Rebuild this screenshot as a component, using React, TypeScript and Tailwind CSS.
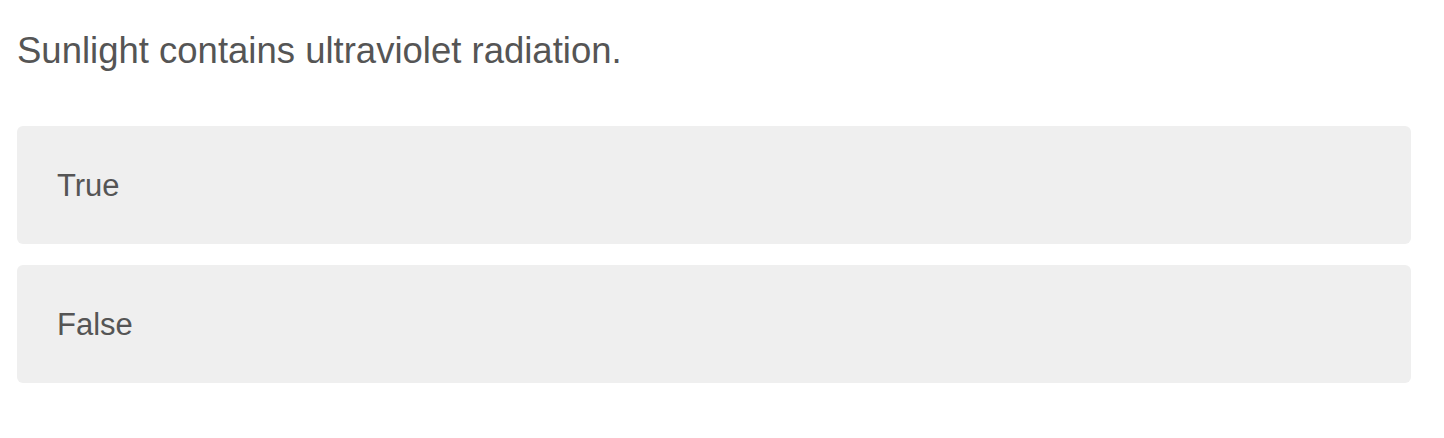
import React from 'react';

const options = ['True', 'False'];

const App: React.FC = () => {
  return (
    <div className="min-h-[438px] bg-white pl-[17px] pr-[33px] pt-[33px] font-['Liberation_Sans',Arial,sans-serif] text-[#555555]">
      <h1 className="text-[36.5px] leading-[36px] font-normal">Sunlight contains ultraviolet radiation.</h1>
      <div className="mt-[57px] flex flex-col gap-[21px]">
        {options.map(option => (
          <div key={option} className="flex h-[118px] items-center rounded-[6px] bg-[#efefef] pl-[40px]">
            <span className="text-[31px] leading-[31px]">{option}</span>
          </div>
        ))}
      </div>
    </div>
  );
};

export default App;
